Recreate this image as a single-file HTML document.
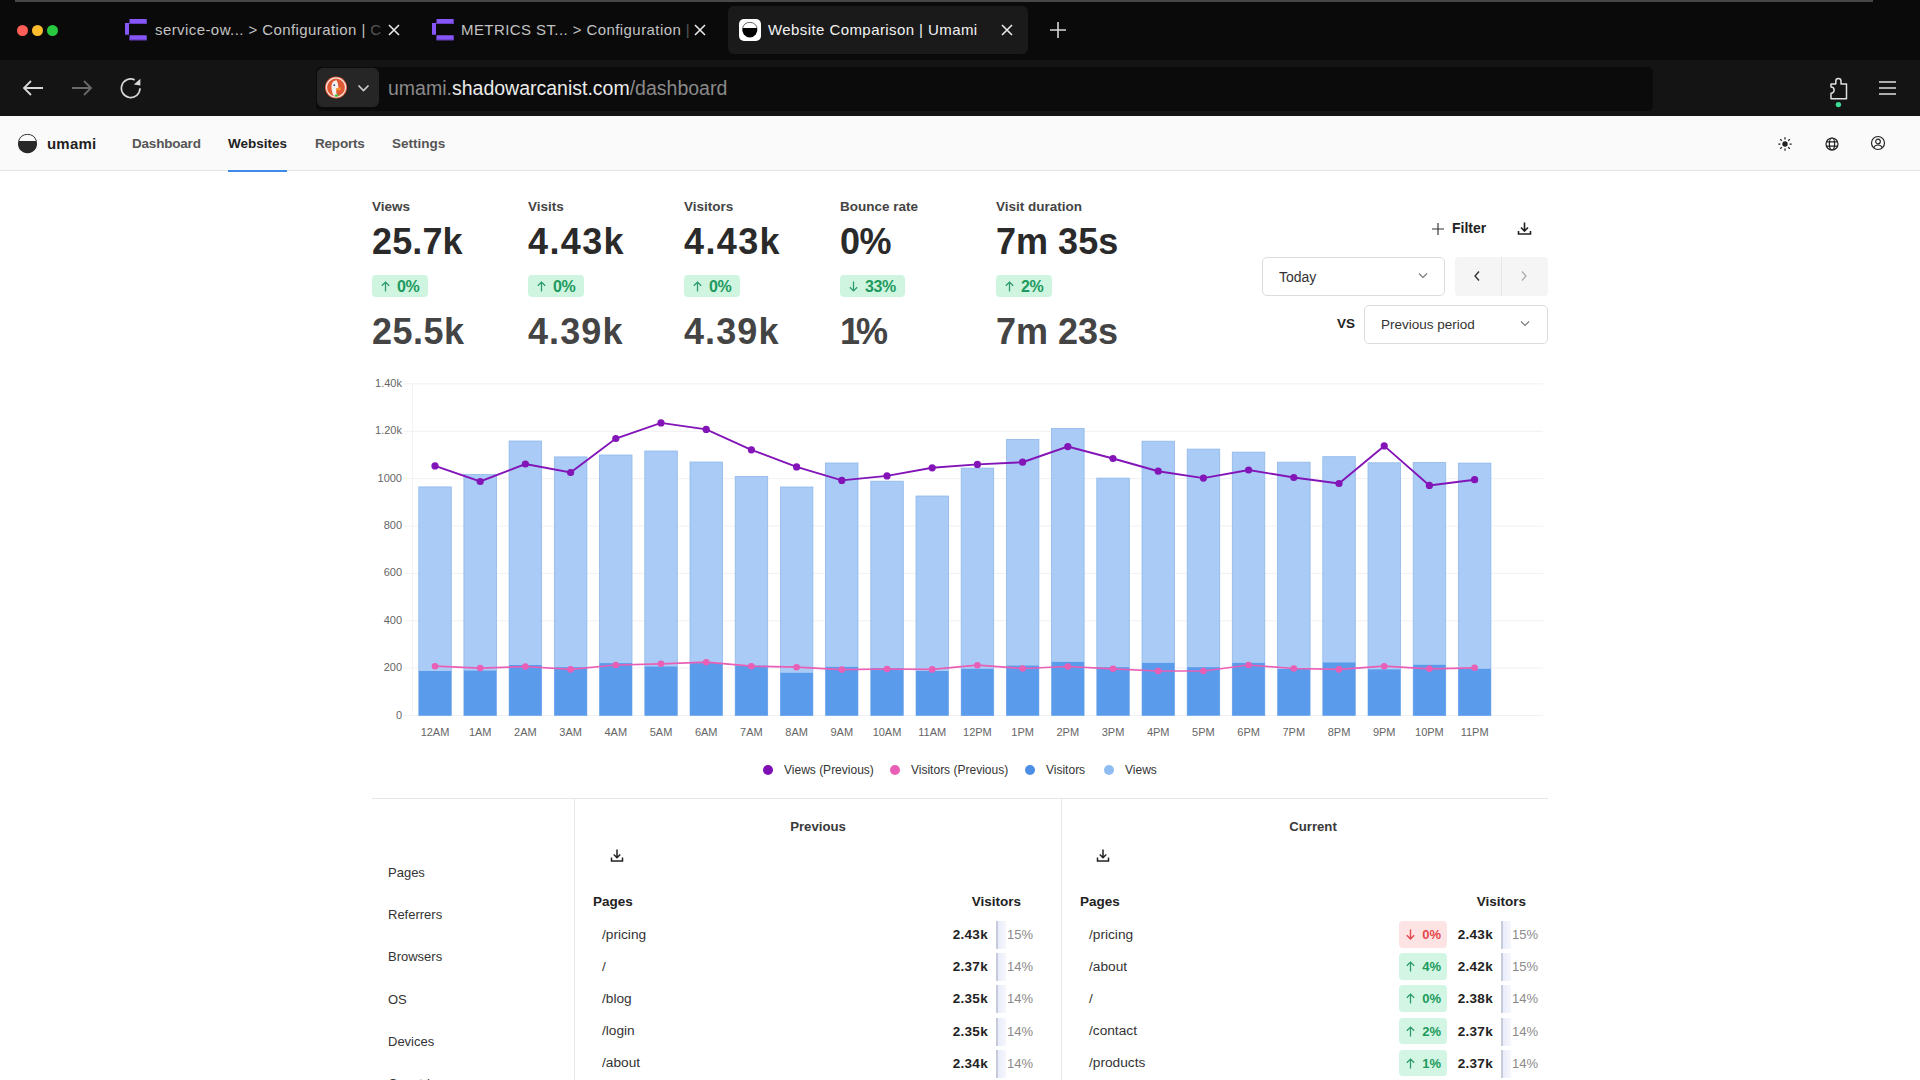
<!DOCTYPE html>
<html><head><meta charset="utf-8">
<style>
*{margin:0;padding:0;box-sizing:border-box}
html,body{width:1920px;height:1080px;overflow:hidden;background:#fff;font-family:"Liberation Sans",sans-serif}
.a{position:absolute;white-space:nowrap}
#tabbar{position:absolute;left:0;top:0;width:1920px;height:60px;background:#0a0a0a}
#addr{position:absolute;left:0;top:60px;width:1920px;height:56px;background:#141414}
#hdr{position:absolute;left:0;top:116px;width:1920px;height:55px;background:#fafafa;border-bottom:1px solid #e2e2e2}
.nav{font-size:13.5px;font-weight:bold;color:#555;top:135px}
.lbl{font-size:13.5px;font-weight:bold;color:#444;top:198.5px}
.big{font-size:36px;font-weight:bold;color:#2a2a2a;top:221px}
.big2{font-size:36px;font-weight:bold;color:#444;top:311px}
.badge{top:275px;height:22px;background:#cff5e1;border-radius:4px;color:#1d9a5d;font-size:16px;font-weight:bold;line-height:22px;padding:0 9px 0 9px;letter-spacing:-0.35px}
.badge svg{display:inline-block;vertical-align:top;margin:5.5px 7px 0 0}
.ylab{font-size:11px;color:#666;text-align:right;width:40px;left:362px}
.xlab{font-size:11px;color:#666;text-align:center;width:50px;top:726px}
.leg{font-size:12px;color:#333;top:763px}
.dot{position:absolute;width:10px;height:10px;border-radius:50%;top:765px}
.menu{font-size:13px;color:#333;left:388px}
.pg{font-size:13.7px;color:#333}
.val{font-size:13.5px;font-weight:bold;color:#222;text-align:right;width:60px;letter-spacing:0.3px}
.pct{font-size:13px;color:#8a8a8a}
.bar{position:absolute;width:2px;height:28px;background:#c6cbdc}
.bbg{position:absolute;width:8px;height:28px;background:linear-gradient(90deg,#e9ecfa,#f6f7fd)}
.cb{font-size:13px;font-weight:bold;height:26.5px;line-height:28.5px;border-radius:4px;padding:0 6px 0 7.5px}
.cb svg{display:inline-block;vertical-align:top;margin:8px 7px 0 0}
.cb{overflow:hidden}
.up{background:#d2f6e3;color:#1d9a5d}
.dn{background:#fde3e3;color:#e5484d}
</style></head><body>

<div id="tabbar">
 <div class="a" style="left:15px;top:0;width:1858px;height:1.5px;background:#474747"></div>
 <div class="a" style="left:17px;top:25px;width:11px;height:11px;border-radius:50%;background:#ff5f57"></div>
 <div class="a" style="left:32px;top:25px;width:11px;height:11px;border-radius:50%;background:#febc2e"></div>
 <div class="a" style="left:47px;top:25px;width:11px;height:11px;border-radius:50%;background:#28c840"></div>
 <svg class="a" style="left:124px;top:18px" width="24" height="24" viewBox="0 0 24 24"><path d="M1 5h4v11.7h-4z M5.5 1h17.2v5h-17.2z M5.5 17.3h17.2v5h-17.2z" fill="#8656f6"/><path d="M5.5 5h17.2v1h-17.2z M5.5 21.3h17.2v1h-17.2z" fill="#6a3fc8"/></svg>
 <div class="a" style="left:155px;top:21px;font-size:15px;color:#c2c2c2;letter-spacing:0.42px">service-ow... &gt; Configuration | <span style="color:#555">C</span></div>
 <svg class="a" style="left:388px;top:24px" width="12" height="12" viewBox="0 0 12 12"><path d="M1 1L11 11M11 1L1 11" stroke="#e8e8e8" stroke-width="1.6"/></svg>
 <svg class="a" style="left:431px;top:18px" width="24" height="24" viewBox="0 0 24 24"><path d="M1 5h4v11.7h-4z M5.5 1h17.2v5h-17.2z M5.5 17.3h17.2v5h-17.2z" fill="#8656f6"/><path d="M5.5 5h17.2v1h-17.2z M5.5 21.3h17.2v1h-17.2z" fill="#6a3fc8"/></svg>
 <div class="a" style="left:461px;top:21px;font-size:15px;color:#c2c2c2;letter-spacing:0.42px">METRICS ST... &gt; Configuration <span style="color:#555">|</span></div>
 <svg class="a" style="left:694px;top:24px" width="12" height="12" viewBox="0 0 12 12"><path d="M1 1L11 11M11 1L1 11" stroke="#e8e8e8" stroke-width="1.6"/></svg>
 <div class="a" style="left:728px;top:6px;width:300px;height:48px;border-radius:6px;background:#1a1a1a"></div>
 <div class="a" style="left:739px;top:18.7px;width:22px;height:22.4px;border-radius:5px;background:#fff"></div>
 <svg class="a" style="left:739px;top:19px" width="22" height="22" viewBox="0 0 22 22"><path d="M3.4 9.1A7.6 7.6 0 1 0 18.2 9.1Z" fill="#000"/><path d="M3.6 9.1A7.4 7.4 0 0 1 18 9.1" fill="none" stroke="#555" stroke-width="0.9"/></svg>
 <div class="a" style="left:768px;top:21px;font-size:15px;color:#f2f2f2;letter-spacing:0.42px">Website Comparison | Umami</div>
 <svg class="a" style="left:1001px;top:24px" width="12" height="12" viewBox="0 0 12 12"><path d="M1 1L11 11M11 1L1 11" stroke="#e8e8e8" stroke-width="1.6"/></svg>
 <svg class="a" style="left:1049px;top:21px" width="18" height="18" viewBox="0 0 18 18"><path d="M9 1V17M1 9H17" stroke="#d8d8d8" stroke-width="1.6"/></svg>
</div>
<div id="addr">
 <svg class="a" style="left:22px;top:19px" width="22" height="18" viewBox="0 0 22 18"><path d="M21 9H2M9 2L2 9L9 16" fill="none" stroke="#d8d8d8" stroke-width="1.8"/></svg>
 <svg class="a" style="left:71px;top:19px" width="22" height="18" viewBox="0 0 22 18"><path d="M1 9H20M13 2L20 9L13 16" fill="none" stroke="#6a6a6a" stroke-width="1.8"/></svg>
 <svg class="a" style="left:120px;top:17px" width="24" height="24" viewBox="0 0 24 24"><path d="M20 11.3A9.3 9.3 0 1 1 14.63 2.87" fill="none" stroke="#d8d8d8" stroke-width="1.7"/><path d="M13.8 7.4L20.4 1.8V8.6z" fill="#d8d8d8"/></svg>
 <div class="a" style="left:316px;top:7px;width:1337px;height:44px;border-radius:5px;background:#0b0b0b"></div>
 <div class="a" style="left:317px;top:8px;width:62px;height:39px;border-radius:6px;background:#262626"></div>
 <svg class="a" style="left:324px;top:16px" width="24" height="24" viewBox="0 0 24 24"><circle cx="12" cy="11.5" r="11" fill="#de5833"/><circle cx="12" cy="11.5" r="9.6" fill="none" stroke="#f4e6e0" stroke-width="1.3"/><path d="M12.5 4.2C9 4.4 7.2 7.5 7.5 12C7.7 16 9 19 10.5 20.6L13.5 20.6C12.5 18.5 12 16 12.3 13.5L14.6 12.5C14 10 14.5 7 12.5 4.2z" fill="#f7f1ee"/><circle cx="10.3" cy="9.2" r="0.9" fill="#2d4f8e"/><path d="M12 12.2L16.8 11.4L16.6 14L12.3 14.4z" fill="#f0932b"/><path d="M10.6 18.8L14.6 18.2L14.2 20.4L11 20.7z" fill="#4cba3c"/></svg>
 <svg class="a" style="left:357px;top:23px" width="13" height="10" viewBox="0 0 13 10"><path d="M1.5 2.5L6.5 7.5L11.5 2.5" fill="none" stroke="#cfcfcf" stroke-width="1.6"/></svg>
 <div class="a" style="left:388px;top:17px;font-size:19.5px;color:#8a8a8a">umami.<span style="color:#ececec">shadowarcanist.com</span>/dashboard</div>
 <svg class="a" style="left:1826px;top:14px" width="24" height="36" viewBox="0 0 24 36"><path d="M5 10H9.8V7A2.6 2.6 0 0 1 15 7V10H20.5V24.8H5V19.3A3.1 3.1 0 0 0 5 13.1z" fill="none" stroke="#e0e0e0" stroke-width="1.5" stroke-linejoin="round"/><circle cx="12.4" cy="30.6" r="2.7" fill="#3ddc97"/></svg>
 <svg class="a" style="left:1878px;top:20px" width="19" height="16" viewBox="0 0 19 16"><path d="M1 2H18M1 8H18M1 14H18" stroke="#e0e0e0" stroke-width="1.7"/></svg>
</div>
<div id="hdr">
 <svg class="a" style="left:17px;top:17px" width="22" height="22" viewBox="0 0 22 22"><path d="M1.41 8A9.5 9.5 0 1 0 19.59 8Z" fill="#282828"/><path d="M1.6 8A9.3 9.3 0 0 1 19.4 8" fill="none" stroke="#333" stroke-width="1"/></svg>
 <div class="a" style="left:47px;top:19px;font-size:15px;font-weight:bold;color:#222;letter-spacing:0.2px">umami</div>
 <div class="a nav" style="left:132px;top:19.6px;letter-spacing:-0.2px">Dashboard</div>
 <div class="a nav" style="left:228px;top:19.6px;color:#222">Websites</div>
 <div class="a nav" style="left:315px;top:19.6px;letter-spacing:-0.2px">Reports</div>
 <div class="a nav" style="left:392px;top:19.6px">Settings</div>
 <div class="a" style="left:228px;top:54px;width:59px;height:2px;background:#3e8ae6"></div>
 <svg class="a" style="left:1777px;top:19.6px" width="16" height="16" viewBox="0 0 16 16"><circle cx="8" cy="8" r="2.7" fill="#222"/><path d="M12.60 8.00L14.70 8.00M11.25 11.25L12.74 12.74M8.00 12.60L8.00 14.70M4.75 11.25L3.26 12.74M3.40 8.00L1.30 8.00M4.75 4.75L3.26 3.26M8.00 3.40L8.00 1.30M11.25 4.75L12.74 3.26" stroke="#222" stroke-width="1.25"/></svg>
 <svg class="a" style="left:1824px;top:19.6px" width="16" height="16" viewBox="0 0 16 16"><g fill="none" stroke="#222" stroke-width="1.2"><circle cx="8" cy="8" r="6"/><ellipse cx="8" cy="8" rx="2.6" ry="6"/><path d="M2.3 5.8H13.7M2.3 10.2H13.7"/></g></svg>
 <svg class="a" style="left:1870px;top:19.4px" width="16" height="16" viewBox="0 0 16 16"><g fill="none" stroke="#222" stroke-width="1.2"><circle cx="8" cy="8" r="6.5"/><circle cx="8" cy="6.5" r="2.3"/><path d="M3.6 12.6C4.6 10.8 6.2 10 8 10C9.8 10 11.4 10.8 12.4 12.6"/></g></svg>
</div>

<div class="a lbl" style="left:372px">Views</div>
<div class="a big" style="left:372px;letter-spacing:0.12px">25.7k</div>
<div class="a badge" style="left:372px"><svg width="9" height="11" viewBox="0 0 9 11"><path d="M4.5 10.5V1.2M0.8 4.8L4.5 1.1L8.2 4.8" fill="none" stroke="#2a9a68" stroke-width="1.25"/></svg><span style="position:relative;top:1.3px">0%</span></div>
<div class="a big2" style="left:372px;letter-spacing:0.5px">25.5k</div>
<div class="a lbl" style="left:528px">Visits</div>
<div class="a big" style="left:528px;letter-spacing:1.37px">4.43k</div>
<div class="a badge" style="left:528px"><svg width="9" height="11" viewBox="0 0 9 11"><path d="M4.5 10.5V1.2M0.8 4.8L4.5 1.1L8.2 4.8" fill="none" stroke="#2a9a68" stroke-width="1.25"/></svg><span style="position:relative;top:1.3px">0%</span></div>
<div class="a big2" style="left:528px;letter-spacing:1.1px">4.39k</div>
<div class="a lbl" style="left:684px">Visitors</div>
<div class="a big" style="left:684px;letter-spacing:1.37px">4.43k</div>
<div class="a badge" style="left:684px"><svg width="9" height="11" viewBox="0 0 9 11"><path d="M4.5 10.5V1.2M0.8 4.8L4.5 1.1L8.2 4.8" fill="none" stroke="#2a9a68" stroke-width="1.25"/></svg><span style="position:relative;top:1.3px">0%</span></div>
<div class="a big2" style="left:684px;letter-spacing:1.1px">4.39k</div>
<div class="a lbl" style="left:840px">Bounce rate</div>
<div class="a big" style="left:840px;letter-spacing:-0.5px">0%</div>
<div class="a badge" style="left:840px"><svg width="9" height="11" viewBox="0 0 9 11"><path d="M4.5 0.5V9.8M0.8 6.2L4.5 9.9L8.2 6.2" fill="none" stroke="#2a9a68" stroke-width="1.25"/></svg><span style="position:relative;top:1.3px">33%</span></div>
<div class="a big2" style="left:840px;letter-spacing:-4px">1%</div>
<div class="a lbl" style="left:996px">Visit duration</div>
<div class="a big" style="left:996px;letter-spacing:0.02px">7m 35s</div>
<div class="a badge" style="left:996px"><svg width="9" height="11" viewBox="0 0 9 11"><path d="M4.5 10.5V1.2M0.8 4.8L4.5 1.1L8.2 4.8" fill="none" stroke="#2a9a68" stroke-width="1.25"/></svg><span style="position:relative;top:1.3px">2%</span></div>
<div class="a big2" style="left:996px;letter-spacing:0.0px">7m 23s</div>
<svg class="a" style="left:1431px;top:222px" width="14" height="14" viewBox="0 0 14 14"><path d="M7 1V13M1 7H13" stroke="#333" stroke-width="1.15"/></svg>
<div class="a" style="left:1452px;top:220px;font-size:14px;font-weight:bold;color:#222">Filter</div>
<svg class="a" style="left:1517px;top:221px" width="15" height="15" viewBox="0 0 15 15"><path d="M7.5 1.5V9.5M4 6.5L7.5 10L11 6.5M1.5 10V13H13.5V10" fill="none" stroke="#222" stroke-width="1.6"/></svg>
<div class="a" style="left:1262px;top:257px;width:183px;height:39px;border:1px solid #dcdcdc;border-radius:5px;background:#fff"></div>
<div class="a" style="left:1279px;top:269px;font-size:14px;color:#333">Today</div>
<svg class="a" style="left:1418px;top:272px" width="10" height="7" viewBox="0 0 10 7"><path d="M1 1.5L5 5.5L9 1.5" fill="none" stroke="#777" stroke-width="1.1"/></svg>
<div class="a" style="left:1455px;top:257px;width:93px;height:39px;background:#f5f5f5;border-radius:4px"></div>
<div class="a" style="left:1501px;top:257px;width:1px;height:39px;background:#e6e6e6"></div>
<svg class="a" style="left:1473px;top:270px" width="8" height="12" viewBox="0 0 8 12"><path d="M6 1.5L2 6L6 10.5" fill="none" stroke="#333" stroke-width="1.4"/></svg>
<svg class="a" style="left:1520px;top:270px" width="8" height="12" viewBox="0 0 8 12"><path d="M2 1.5L6 6L2 10.5" fill="none" stroke="#aaa" stroke-width="1.2"/></svg>
<div class="a" style="left:1337px;top:316px;font-size:13.5px;font-weight:bold;color:#222">VS</div>
<div class="a" style="left:1364px;top:305px;width:184px;height:39px;border:1px solid #dcdcdc;border-radius:5px;background:#fff"></div>
<div class="a" style="left:1381px;top:317px;font-size:13.5px;color:#333">Previous period</div>
<svg class="a" style="left:1520px;top:320px" width="10" height="7" viewBox="0 0 10 7"><path d="M1 1.5L5 5.5L9 1.5" fill="none" stroke="#777" stroke-width="1.1"/></svg>

<svg class="a" style="left:0;top:0" width="1920" height="1080" viewBox="0 0 1920 1080">
<line x1="404" y1="715.5" x2="1543" y2="715.5" stroke="#f1f1f1" stroke-width="1"/>
<line x1="404" y1="668.1" x2="1543" y2="668.1" stroke="#f1f1f1" stroke-width="1"/>
<line x1="404" y1="620.8" x2="1543" y2="620.8" stroke="#f1f1f1" stroke-width="1"/>
<line x1="404" y1="573.4" x2="1543" y2="573.4" stroke="#f1f1f1" stroke-width="1"/>
<line x1="404" y1="526.0" x2="1543" y2="526.0" stroke="#f1f1f1" stroke-width="1"/>
<line x1="404" y1="478.6" x2="1543" y2="478.6" stroke="#f1f1f1" stroke-width="1"/>
<line x1="404" y1="431.3" x2="1543" y2="431.3" stroke="#f1f1f1" stroke-width="1"/>
<line x1="404" y1="383.9" x2="1543" y2="383.9" stroke="#f1f1f1" stroke-width="1"/>
<line x1="412.5" y1="383" x2="412.5" y2="716" stroke="#f3f3f3" stroke-width="1"/>
<rect x="418.8" y="486.9" width="32.5" height="228.6" fill="#a9cbf5" stroke="#8fb8ec" stroke-width="0.8"/>
<rect x="463.9" y="474.4" width="32.5" height="241.1" fill="#a9cbf5" stroke="#8fb8ec" stroke-width="0.8"/>
<rect x="509.1" y="441.0" width="32.5" height="274.5" fill="#a9cbf5" stroke="#8fb8ec" stroke-width="0.8"/>
<rect x="554.4" y="456.9" width="32.5" height="258.6" fill="#a9cbf5" stroke="#8fb8ec" stroke-width="0.8"/>
<rect x="599.5" y="455.0" width="32.5" height="260.5" fill="#a9cbf5" stroke="#8fb8ec" stroke-width="0.8"/>
<rect x="644.8" y="451.0" width="32.5" height="264.5" fill="#a9cbf5" stroke="#8fb8ec" stroke-width="0.8"/>
<rect x="690.0" y="462.0" width="32.5" height="253.5" fill="#a9cbf5" stroke="#8fb8ec" stroke-width="0.8"/>
<rect x="735.2" y="476.5" width="32.5" height="239.0" fill="#a9cbf5" stroke="#8fb8ec" stroke-width="0.8"/>
<rect x="780.4" y="487.0" width="32.5" height="228.5" fill="#a9cbf5" stroke="#8fb8ec" stroke-width="0.8"/>
<rect x="825.5" y="463.0" width="32.5" height="252.5" fill="#a9cbf5" stroke="#8fb8ec" stroke-width="0.8"/>
<rect x="870.8" y="481.2" width="32.5" height="234.2" fill="#a9cbf5" stroke="#8fb8ec" stroke-width="0.8"/>
<rect x="916.0" y="496.0" width="32.5" height="219.5" fill="#a9cbf5" stroke="#8fb8ec" stroke-width="0.8"/>
<rect x="961.2" y="468.1" width="32.5" height="247.4" fill="#a9cbf5" stroke="#8fb8ec" stroke-width="0.8"/>
<rect x="1006.4" y="439.4" width="32.5" height="276.1" fill="#a9cbf5" stroke="#8fb8ec" stroke-width="0.8"/>
<rect x="1051.6" y="428.4" width="32.5" height="287.1" fill="#a9cbf5" stroke="#8fb8ec" stroke-width="0.8"/>
<rect x="1096.8" y="478.1" width="32.5" height="237.4" fill="#a9cbf5" stroke="#8fb8ec" stroke-width="0.8"/>
<rect x="1142.0" y="441.2" width="32.5" height="274.2" fill="#a9cbf5" stroke="#8fb8ec" stroke-width="0.8"/>
<rect x="1187.2" y="449.1" width="32.5" height="266.4" fill="#a9cbf5" stroke="#8fb8ec" stroke-width="0.8"/>
<rect x="1232.3" y="452.1" width="32.5" height="263.4" fill="#a9cbf5" stroke="#8fb8ec" stroke-width="0.8"/>
<rect x="1277.6" y="462.2" width="32.5" height="253.2" fill="#a9cbf5" stroke="#8fb8ec" stroke-width="0.8"/>
<rect x="1322.8" y="456.7" width="32.5" height="258.8" fill="#a9cbf5" stroke="#8fb8ec" stroke-width="0.8"/>
<rect x="1368.0" y="462.8" width="32.5" height="252.7" fill="#a9cbf5" stroke="#8fb8ec" stroke-width="0.8"/>
<rect x="1413.2" y="462.5" width="32.5" height="253.0" fill="#a9cbf5" stroke="#8fb8ec" stroke-width="0.8"/>
<rect x="1458.4" y="463.1" width="32.5" height="252.4" fill="#a9cbf5" stroke="#8fb8ec" stroke-width="0.8"/>
<rect x="418.8" y="671.0" width="32.5" height="44.5" fill="#5a9bec"/>
<rect x="463.9" y="670.6" width="32.5" height="44.9" fill="#5a9bec"/>
<rect x="509.1" y="665.0" width="32.5" height="50.5" fill="#5a9bec"/>
<rect x="554.4" y="667.2" width="32.5" height="48.2" fill="#5a9bec"/>
<rect x="599.5" y="663.1" width="32.5" height="52.4" fill="#5a9bec"/>
<rect x="644.8" y="666.5" width="32.5" height="49.0" fill="#5a9bec"/>
<rect x="690.0" y="663.1" width="32.5" height="52.4" fill="#5a9bec"/>
<rect x="735.2" y="665.6" width="32.5" height="49.9" fill="#5a9bec"/>
<rect x="780.4" y="672.8" width="32.5" height="42.8" fill="#5a9bec"/>
<rect x="825.5" y="666.9" width="32.5" height="48.6" fill="#5a9bec"/>
<rect x="870.8" y="668.1" width="32.5" height="47.4" fill="#5a9bec"/>
<rect x="916.0" y="671.0" width="32.5" height="44.5" fill="#5a9bec"/>
<rect x="961.2" y="668.8" width="32.5" height="46.8" fill="#5a9bec"/>
<rect x="1006.4" y="665.6" width="32.5" height="49.9" fill="#5a9bec"/>
<rect x="1051.6" y="661.9" width="32.5" height="53.6" fill="#5a9bec"/>
<rect x="1096.8" y="667.2" width="32.5" height="48.2" fill="#5a9bec"/>
<rect x="1142.0" y="662.9" width="32.5" height="52.6" fill="#5a9bec"/>
<rect x="1187.2" y="667.2" width="32.5" height="48.2" fill="#5a9bec"/>
<rect x="1232.3" y="662.9" width="32.5" height="52.6" fill="#5a9bec"/>
<rect x="1277.6" y="669.0" width="32.5" height="46.5" fill="#5a9bec"/>
<rect x="1322.8" y="662.5" width="32.5" height="53.0" fill="#5a9bec"/>
<rect x="1368.0" y="669.4" width="32.5" height="46.1" fill="#5a9bec"/>
<rect x="1413.2" y="664.8" width="32.5" height="50.8" fill="#5a9bec"/>
<rect x="1458.4" y="668.8" width="32.5" height="46.8" fill="#5a9bec"/>
<polyline points="435.0,465.9 480.2,481.5 525.4,464.0 570.6,472.5 615.8,438.5 661.0,422.9 706.2,429.4 751.4,449.8 796.6,466.9 841.8,480.4 887.0,475.9 932.2,467.8 977.4,464.4 1022.6,462.2 1067.8,446.6 1113.0,458.5 1158.2,471.2 1203.4,478.1 1248.6,470.0 1293.8,477.5 1339.0,483.5 1384.2,445.9 1429.4,485.4 1474.6,479.7" fill="none" stroke="#8214b8" stroke-width="1.9"/>
<circle cx="435.0" cy="465.9" r="3.6" fill="#8214b8"/>
<circle cx="480.2" cy="481.5" r="3.6" fill="#8214b8"/>
<circle cx="525.4" cy="464.0" r="3.6" fill="#8214b8"/>
<circle cx="570.6" cy="472.5" r="3.6" fill="#8214b8"/>
<circle cx="615.8" cy="438.5" r="3.6" fill="#8214b8"/>
<circle cx="661.0" cy="422.9" r="3.6" fill="#8214b8"/>
<circle cx="706.2" cy="429.4" r="3.6" fill="#8214b8"/>
<circle cx="751.4" cy="449.8" r="3.6" fill="#8214b8"/>
<circle cx="796.6" cy="466.9" r="3.6" fill="#8214b8"/>
<circle cx="841.8" cy="480.4" r="3.6" fill="#8214b8"/>
<circle cx="887.0" cy="475.9" r="3.6" fill="#8214b8"/>
<circle cx="932.2" cy="467.8" r="3.6" fill="#8214b8"/>
<circle cx="977.4" cy="464.4" r="3.6" fill="#8214b8"/>
<circle cx="1022.6" cy="462.2" r="3.6" fill="#8214b8"/>
<circle cx="1067.8" cy="446.6" r="3.6" fill="#8214b8"/>
<circle cx="1113.0" cy="458.5" r="3.6" fill="#8214b8"/>
<circle cx="1158.2" cy="471.2" r="3.6" fill="#8214b8"/>
<circle cx="1203.4" cy="478.1" r="3.6" fill="#8214b8"/>
<circle cx="1248.6" cy="470.0" r="3.6" fill="#8214b8"/>
<circle cx="1293.8" cy="477.5" r="3.6" fill="#8214b8"/>
<circle cx="1339.0" cy="483.5" r="3.6" fill="#8214b8"/>
<circle cx="1384.2" cy="445.9" r="3.6" fill="#8214b8"/>
<circle cx="1429.4" cy="485.4" r="3.6" fill="#8214b8"/>
<circle cx="1474.6" cy="479.7" r="3.6" fill="#8214b8"/>
<polyline points="435.0,666.2 480.2,668.1 525.4,666.5 570.6,669.4 615.8,665.0 661.0,663.8 706.2,662.2 751.4,666.2 796.6,667.2 841.8,669.6 887.0,669.0 932.2,669.4 977.4,665.2 1022.6,668.5 1067.8,666.5 1113.0,668.8 1158.2,671.0 1203.4,671.0 1248.6,665.0 1293.8,668.5 1339.0,669.4 1384.2,666.2 1429.4,668.8 1474.6,667.8" fill="none" stroke="#e95fb5" stroke-width="1.7"/>
<circle cx="435.0" cy="666.2" r="3.3" fill="#e95fb5"/>
<circle cx="480.2" cy="668.1" r="3.3" fill="#e95fb5"/>
<circle cx="525.4" cy="666.5" r="3.3" fill="#e95fb5"/>
<circle cx="570.6" cy="669.4" r="3.3" fill="#e95fb5"/>
<circle cx="615.8" cy="665.0" r="3.3" fill="#e95fb5"/>
<circle cx="661.0" cy="663.8" r="3.3" fill="#e95fb5"/>
<circle cx="706.2" cy="662.2" r="3.3" fill="#e95fb5"/>
<circle cx="751.4" cy="666.2" r="3.3" fill="#e95fb5"/>
<circle cx="796.6" cy="667.2" r="3.3" fill="#e95fb5"/>
<circle cx="841.8" cy="669.6" r="3.3" fill="#e95fb5"/>
<circle cx="887.0" cy="669.0" r="3.3" fill="#e95fb5"/>
<circle cx="932.2" cy="669.4" r="3.3" fill="#e95fb5"/>
<circle cx="977.4" cy="665.2" r="3.3" fill="#e95fb5"/>
<circle cx="1022.6" cy="668.5" r="3.3" fill="#e95fb5"/>
<circle cx="1067.8" cy="666.5" r="3.3" fill="#e95fb5"/>
<circle cx="1113.0" cy="668.8" r="3.3" fill="#e95fb5"/>
<circle cx="1158.2" cy="671.0" r="3.3" fill="#e95fb5"/>
<circle cx="1203.4" cy="671.0" r="3.3" fill="#e95fb5"/>
<circle cx="1248.6" cy="665.0" r="3.3" fill="#e95fb5"/>
<circle cx="1293.8" cy="668.5" r="3.3" fill="#e95fb5"/>
<circle cx="1339.0" cy="669.4" r="3.3" fill="#e95fb5"/>
<circle cx="1384.2" cy="666.2" r="3.3" fill="#e95fb5"/>
<circle cx="1429.4" cy="668.8" r="3.3" fill="#e95fb5"/>
<circle cx="1474.6" cy="667.8" r="3.3" fill="#e95fb5"/>
</svg>
<div class="a ylab" style="top:708.5px">0</div>
<div class="a ylab" style="top:661.1px">200</div>
<div class="a ylab" style="top:613.8px">400</div>
<div class="a ylab" style="top:566.4px">600</div>
<div class="a ylab" style="top:519.0px">800</div>
<div class="a ylab" style="top:471.6px">1000</div>
<div class="a ylab" style="top:424.3px">1.20k</div>
<div class="a ylab" style="top:376.9px">1.40k</div>
<div class="a xlab" style="left:410.0px">12AM</div>
<div class="a xlab" style="left:455.2px">1AM</div>
<div class="a xlab" style="left:500.4px">2AM</div>
<div class="a xlab" style="left:545.6px">3AM</div>
<div class="a xlab" style="left:590.8px">4AM</div>
<div class="a xlab" style="left:636.0px">5AM</div>
<div class="a xlab" style="left:681.2px">6AM</div>
<div class="a xlab" style="left:726.4px">7AM</div>
<div class="a xlab" style="left:771.6px">8AM</div>
<div class="a xlab" style="left:816.8px">9AM</div>
<div class="a xlab" style="left:862.0px">10AM</div>
<div class="a xlab" style="left:907.2px">11AM</div>
<div class="a xlab" style="left:952.4px">12PM</div>
<div class="a xlab" style="left:997.6px">1PM</div>
<div class="a xlab" style="left:1042.8px">2PM</div>
<div class="a xlab" style="left:1088.0px">3PM</div>
<div class="a xlab" style="left:1133.2px">4PM</div>
<div class="a xlab" style="left:1178.4px">5PM</div>
<div class="a xlab" style="left:1223.6px">6PM</div>
<div class="a xlab" style="left:1268.8px">7PM</div>
<div class="a xlab" style="left:1314.0px">8PM</div>
<div class="a xlab" style="left:1359.2px">9PM</div>
<div class="a xlab" style="left:1404.4px">10PM</div>
<div class="a xlab" style="left:1449.6px">11PM</div>
<div class="dot" style="left:763px;background:#7e0fb5"></div><div class="a leg" style="left:784px">Views (Previous)</div>
<div class="dot" style="left:890px;background:#e95fb5"></div><div class="a leg" style="left:911px">Visitors (Previous)</div>
<div class="dot" style="left:1025px;background:#4c8ee6"></div><div class="a leg" style="left:1046px">Visitors</div>
<div class="dot" style="left:1104px;background:#8fbdf3"></div><div class="a leg" style="left:1125px">Views</div>
<div class="a" style="left:372px;top:798px;width:1176px;height:1px;background:#e6e6e6"></div>
<div class="a" style="left:574px;top:799px;width:1px;height:281px;background:#e8e8e8"></div>
<div class="a" style="left:1061px;top:799px;width:1px;height:281px;background:#e8e8e8"></div>
<div class="a menu" style="top:865.0px">Pages</div>
<div class="a menu" style="top:907.2px">Referrers</div>
<div class="a menu" style="top:949.4px">Browsers</div>
<div class="a menu" style="top:991.6px">OS</div>
<div class="a menu" style="top:1033.8px">Devices</div>
<div class="a menu" style="top:1076.0px">Countries</div>
<div class="a" style="left:575px;width:486px;top:819px;text-align:center;font-size:13.2px;font-weight:bold;color:#3a3a3a">Previous</div>
<div class="a" style="left:1062px;width:502px;top:819px;text-align:center;font-size:13.2px;font-weight:bold;color:#3a3a3a">Current</div>
<svg class="a" style="left:610px;top:848px" width="14" height="15" viewBox="0 0 14 15"><path d="M7 1.5V9.5M3.8 6.5L7 9.7L10.2 6.5M1.5 9.5V13H12.5V9.5" fill="none" stroke="#222" stroke-width="1.5"/></svg>
<svg class="a" style="left:1096px;top:848px" width="14" height="15" viewBox="0 0 14 15"><path d="M7 1.5V9.5M3.8 6.5L7 9.7L10.2 6.5M1.5 9.5V13H12.5V9.5" fill="none" stroke="#222" stroke-width="1.5"/></svg>
<div class="a" style="left:593px;top:894px;font-size:13.5px;font-weight:bold;color:#222">Pages</div>
<div class="a" style="left:921px;width:100px;text-align:right;top:894px;font-size:13.5px;font-weight:bold;color:#222">Visitors</div>
<div class="a" style="left:1080px;top:894px;font-size:13.5px;font-weight:bold;color:#222">Pages</div>
<div class="a" style="left:1426px;width:100px;text-align:right;top:894px;font-size:13.5px;font-weight:bold;color:#222">Visitors</div>
<div class="a pg" style="left:602px;top:926.5px">/pricing</div>
<div class="a val" style="left:928px;top:927.0px">2.43k</div>
<div class="bbg" style="left:998px;top:921.0px"></div><div class="bar" style="left:996px;top:921.0px"></div>
<div class="a pct" style="left:1007px;top:927.0px">15%</div>
<div class="a pg" style="left:602px;top:958.7px">/</div>
<div class="a val" style="left:928px;top:959.2px">2.37k</div>
<div class="bbg" style="left:998px;top:953.2px"></div><div class="bar" style="left:996px;top:953.2px"></div>
<div class="a pct" style="left:1007px;top:959.2px">14%</div>
<div class="a pg" style="left:602px;top:990.9px">/blog</div>
<div class="a val" style="left:928px;top:991.4px">2.35k</div>
<div class="bbg" style="left:998px;top:985.4px"></div><div class="bar" style="left:996px;top:985.4px"></div>
<div class="a pct" style="left:1007px;top:991.4px">14%</div>
<div class="a pg" style="left:602px;top:1023.1px">/login</div>
<div class="a val" style="left:928px;top:1023.6px">2.35k</div>
<div class="bbg" style="left:998px;top:1017.6px"></div><div class="bar" style="left:996px;top:1017.6px"></div>
<div class="a pct" style="left:1007px;top:1023.6px">14%</div>
<div class="a pg" style="left:602px;top:1055.3px">/about</div>
<div class="a val" style="left:928px;top:1055.8px">2.34k</div>
<div class="bbg" style="left:998px;top:1049.8px"></div><div class="bar" style="left:996px;top:1049.8px"></div>
<div class="a pct" style="left:1007px;top:1055.8px">14%</div>
<div class="a pg" style="left:1089px;top:926.5px">/pricing</div>
<div class="a cb dn" style="right:473px;top:921.0px"><svg width="9" height="11" viewBox="0 0 9 11"><path d="M4.5 0.5V9.8M0.8 6.2L4.5 9.9L8.2 6.2" fill="none" stroke="#e5484d" stroke-width="1.4"/></svg>0%</div>
<div class="a val" style="left:1433px;top:927.0px">2.43k</div>
<div class="bbg" style="left:1503px;top:921.0px"></div><div class="bar" style="left:1501px;top:921.0px"></div>
<div class="a pct" style="left:1512px;top:927.0px">15%</div>
<div class="a pg" style="left:1089px;top:958.7px">/about</div>
<div class="a cb up" style="right:473px;top:953.2px"><svg width="9" height="11" viewBox="0 0 9 11"><path d="M4.5 10.5V1.2M0.8 4.8L4.5 1.1L8.2 4.8" fill="none" stroke="#2a9a68" stroke-width="1.25"/></svg>4%</div>
<div class="a val" style="left:1433px;top:959.2px">2.42k</div>
<div class="bbg" style="left:1503px;top:953.2px"></div><div class="bar" style="left:1501px;top:953.2px"></div>
<div class="a pct" style="left:1512px;top:959.2px">15%</div>
<div class="a pg" style="left:1089px;top:990.9px">/</div>
<div class="a cb up" style="right:473px;top:985.4px"><svg width="9" height="11" viewBox="0 0 9 11"><path d="M4.5 10.5V1.2M0.8 4.8L4.5 1.1L8.2 4.8" fill="none" stroke="#2a9a68" stroke-width="1.25"/></svg>0%</div>
<div class="a val" style="left:1433px;top:991.4px">2.38k</div>
<div class="bbg" style="left:1503px;top:985.4px"></div><div class="bar" style="left:1501px;top:985.4px"></div>
<div class="a pct" style="left:1512px;top:991.4px">14%</div>
<div class="a pg" style="left:1089px;top:1023.1px">/contact</div>
<div class="a cb up" style="right:473px;top:1017.6px"><svg width="9" height="11" viewBox="0 0 9 11"><path d="M4.5 10.5V1.2M0.8 4.8L4.5 1.1L8.2 4.8" fill="none" stroke="#2a9a68" stroke-width="1.25"/></svg>2%</div>
<div class="a val" style="left:1433px;top:1023.6px">2.37k</div>
<div class="bbg" style="left:1503px;top:1017.6px"></div><div class="bar" style="left:1501px;top:1017.6px"></div>
<div class="a pct" style="left:1512px;top:1023.6px">14%</div>
<div class="a pg" style="left:1089px;top:1055.3px">/products</div>
<div class="a cb up" style="right:473px;top:1049.8px"><svg width="9" height="11" viewBox="0 0 9 11"><path d="M4.5 10.5V1.2M0.8 4.8L4.5 1.1L8.2 4.8" fill="none" stroke="#2a9a68" stroke-width="1.25"/></svg>1%</div>
<div class="a val" style="left:1433px;top:1055.8px">2.37k</div>
<div class="bbg" style="left:1503px;top:1049.8px"></div><div class="bar" style="left:1501px;top:1049.8px"></div>
<div class="a pct" style="left:1512px;top:1055.8px">14%</div>
</body></html>
